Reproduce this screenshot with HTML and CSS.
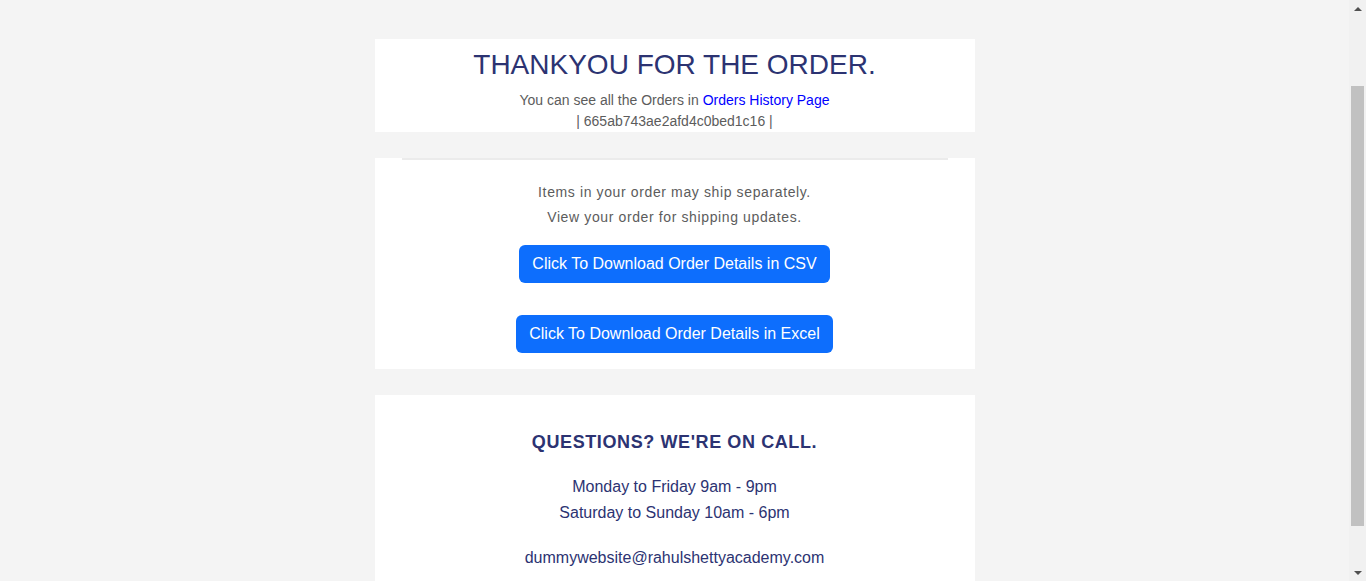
FILE: index.html
```html
<!DOCTYPE html>
<html lang="en">
<head>
<meta charset="utf-8">
<title>Thank you</title>
<link rel="stylesheet" href="styles.css">
</head>
<body>
<main class="page">
  <section class="card card-head">
    <h1 class="title">THANKYOU FOR THE ORDER.</h1>
    <p class="sub">You can see all the Orders in <a class="link" href="#">Orders History Page</a></p>
    <p class="order-id">| 665ab743ae2afd4c0bed1c16 |</p>
  </section>
  <section class="card card-ship">
    <hr class="rule">
    <p class="ship">Items in your order may ship separately.</p>
    <p class="ship">View your order for shipping updates.</p>
    <div class="actions">
      <button class="btn" type="button">Click To Download Order Details in CSV</button>
      <button class="btn" type="button">Click To Download Order Details in Excel</button>
    </div>
  </section>
  <section class="card card-help">
    <h2 class="help-title">QUESTIONS? WE'RE ON CALL.</h2>
    <p class="hours">Monday to Friday 9am - 9pm</p>
    <p class="hours">Saturday to Sunday 10am - 6pm</p>
    <p class="email">dummywebsite@rahulshettyacademy.com</p>
  </section>
</main>
<div class="scrollbar" aria-hidden="true">
  <div class="sb-btn"><span class="arrow-up"></span></div>
  <div class="sb-track"><div class="sb-thumb"></div></div>
  <div class="sb-btn"><span class="arrow-down"></span></div>
</div>
<script src="script.js"></script>
</body>
</html>
```

FILE: styles.css
```css
html, body {
  margin: 0;
  padding: 0;
}
body {
  background: #f4f4f4;
  font-family: "Liberation Sans", Arial, sans-serif;
  color: #5c5c5c;
  padding-right: 17px;
}
.page {
  width: 600px;
  margin: 0 auto;
  padding-top: 130px;
  display: flex;
  flex-direction: column;
  gap: 26px;
}
.card {
  background: #fff;
  text-align: center;
}
.card-head {
  padding-top: 9px;
}
.title {
  margin: 0 0 8px;
  font-size: 28px;
  line-height: 34px;
  font-weight: 400;
  color: #2c3372;
}
.sub, .order-id {
  margin: 0;
  font-size: 14px;
  line-height: 21px;
  color: #5c5c5c;
}
.link {
  color: #0000ff;
  text-decoration: none;
}
.card-ship {
  padding: 0 27px 16px;
}
.rule {
  margin: 0 0 20px;
  border: 0;
  height: 2px;
  background: #ebebeb;
}
.ship {
  margin: 0;
  font-size: 14px;
  line-height: 25px;
  letter-spacing: 0.62px;
  color: #5c5c5c;
}
.actions {
  margin-top: 15px;
  display: flex;
  flex-direction: column;
  align-items: center;
  gap: 32px;
}
.btn {
  font-family: "Liberation Sans", Arial, sans-serif;
  font-size: 16px;
  line-height: 24px;
  padding: 7px 13px;
  border: 0;
  border-radius: 6px;
  background: #0d6efd;
  color: #fff;
}
.card-help {
  padding: 34px 0 60px;
  color: #2c3372;
}
.help-title {
  margin: 0 0 19px;
  font-size: 18px;
  line-height: 26px;
  font-weight: 700;
  letter-spacing: 0.6px;
}
.hours {
  margin: 0;
  font-size: 16px;
  line-height: 26px;
}
.email {
  margin: 19px 0 0;
  font-size: 16px;
  line-height: 26px;
}

/* fake classic scrollbar */
.scrollbar {
  position: fixed;
  top: 0;
  right: 0;
  width: 17px;
  height: 100vh;
  background: #f1f1f1;
  display: flex;
  flex-direction: column;
}
.sb-btn {
  height: 17px;
  flex: 0 0 17px;
  position: relative;
}
.arrow-up, .arrow-down {
  position: absolute;
  left: 5px;
  width: 0;
  height: 0;
  border-left: 4px solid transparent;
  border-right: 4px solid transparent;
}
.arrow-up {
  top: 7px;
  border-bottom: 4px solid #505050;
}
.arrow-down {
  top: 7px;
  border-top: 4px solid #505050;
}
.sb-track {
  flex: 1;
  padding: 69px 2px 0;
}
.sb-thumb {
  height: 440px;
  background: #c1c1c1;
}
```

FILE: script.js
```js
window.scrollTo(0, 91);
window.addEventListener('load', function () {
  window.scrollTo(0, 91);
});
```
